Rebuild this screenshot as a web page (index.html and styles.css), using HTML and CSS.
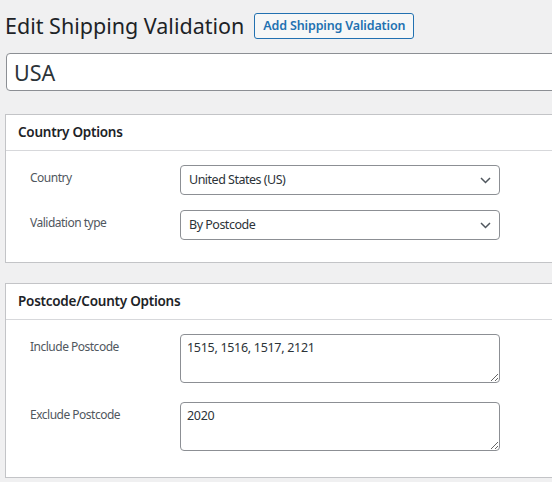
FILE: index.html
```html
<!DOCTYPE html>
<html lang="en">
<head>
<meta charset="utf-8">
<title>Edit Shipping Validation</title>
<link rel="stylesheet" href="styles.css">
</head>
<body>
<div class="wrap">
  <div class="title-row">
    <h1 class="page-title">Edit Shipping Validation</h1>
    <a class="title-action" href="#">Add Shipping Validation</a>
  </div>
  <input class="title-input" type="text" value="USA">

  <div class="panel panel-country">
    <div class="panel-head"><h2 class="panel-title">Country Options</h2></div>
    <div class="panel-body">
      <div class="field-row">
        <label class="field-label">Country</label>
        <div class="select-box">
          <span class="select-value">United States (US)</span>
          <svg class="chevron" width="11" height="7" viewBox="0 0 11 7"><polyline points="1,1 5.5,5.5 10,1" fill="none" stroke="#50575e" stroke-width="1.5"/></svg>
        </div>
      </div>
      <div class="field-row">
        <label class="field-label">Validation type</label>
        <div class="select-box">
          <span class="select-value">By Postcode</span>
          <svg class="chevron" width="11" height="7" viewBox="0 0 11 7"><polyline points="1,1 5.5,5.5 10,1" fill="none" stroke="#50575e" stroke-width="1.5"/></svg>
        </div>
      </div>
    </div>
  </div>

  <div class="panel panel-postcode">
    <div class="panel-head"><h2 class="panel-title">Postcode/County Options</h2></div>
    <div class="panel-body">
      <div class="field-row">
        <label class="field-label">Include Postcode</label>
        <textarea class="text-area">1515, 1516, 1517, 2121</textarea>
      </div>
      <div class="field-row">
        <label class="field-label">Exclude Postcode</label>
        <textarea class="text-area">2020</textarea>
      </div>
    </div>
  </div>
</div>
</body>
</html>
```
FILE: styles.css
```css
html, body {
  margin: 0;
  padding: 0;
  overflow: hidden;
  background: #f0f0f1;
}
body {
  font-family: "Noto Sans", "Open Sans", sans-serif;
  color: #3c434a;
  font-size: 13px;
}
.wrap {
  width: 640px;
  padding-left: 5px;
}
.title-row {
  display: flex;
  align-items: center;
  gap: 10px;
  padding-top: 10px;
  height: 32px;
}
.page-title {
  margin: 0;
  font-size: 21.5px;
  font-weight: 400;
  line-height: 32px;
  color: #1d2327;
}
.title-action {
  display: inline-flex;
  align-items: center;
  box-sizing: border-box;
  height: 26px;
  padding: 0 8px;
  border: 1px solid #2271b1;
  border-radius: 3px;
  background: #f6f7f7;
  color: #2271b1;
  font-size: 12.5px;
  font-weight: 600;
  letter-spacing: -0.15px;
  text-decoration: none;
  margin-top: -1px;
}
.title-input {
  display: block;
  box-sizing: border-box;
  width: 100%;
  height: 38px;
  margin: 11px 0 0 1px;
  padding: 0 7px;
  border: 1px solid #8c8f94;
  border-radius: 4px;
  background: #fff;
  font-family: inherit;
  font-size: 21.5px;
  color: #2c3338;
}
.panel {
  background: #fff;
  border: 1px solid #c3c4c7;
}
.panel-country { margin-top: 23px; }
.panel-postcode { margin-top: 20px; }
.panel-head {
  height: 35px;
  border-bottom: 1px solid #d7d8db;
  padding-left: 12px;
}
.panel-title {
  margin: 0;
  font-size: 13.5px;
  font-weight: 600;
  letter-spacing: -0.25px;
  line-height: 35px;
  color: #1d2327;
}
.panel-body {
  padding: 14px 0 22px 24px;
  display: flex;
  flex-direction: column;
  gap: 15px;
}
.panel-postcode .panel-body {
  padding-bottom: 26px;
  gap: 19px;
}
.field-row {
  display: grid;
  grid-template-columns: 150px 320px;
  align-items: start;
}
.field-label {
  padding-top: 3px;
  line-height: 20px;
  font-size: 12px;
  letter-spacing: -0.5px;
  color: #50575e;
}
.select-box {
  position: relative;
  box-sizing: border-box;
  height: 30px;
  border: 1px solid #8c8f94;
  border-radius: 4px;
  background: #fff;
  padding: 0 30px 0 8px;
  display: flex;
  align-items: center;
}
.select-value {
  font-size: 12.5px;
  letter-spacing: -0.5px;
  line-height: 28px;
  color: #2c3338;
}
.chevron {
  position: absolute;
  right: 8px;
  top: 11px;
}
.text-area {
  box-sizing: border-box;
  width: 320px;
  height: 49px;
  margin: 0;
  padding: 3px 6px 2px;
  border: 1px solid #8c8f94;
  border-radius: 4px;
  background: #fff;
  font-family: inherit;
  font-size: 12.5px;
  letter-spacing: -0.3px;
  line-height: 20px;
  color: #2c3338;
  resize: vertical;
  display: block;
}
```
